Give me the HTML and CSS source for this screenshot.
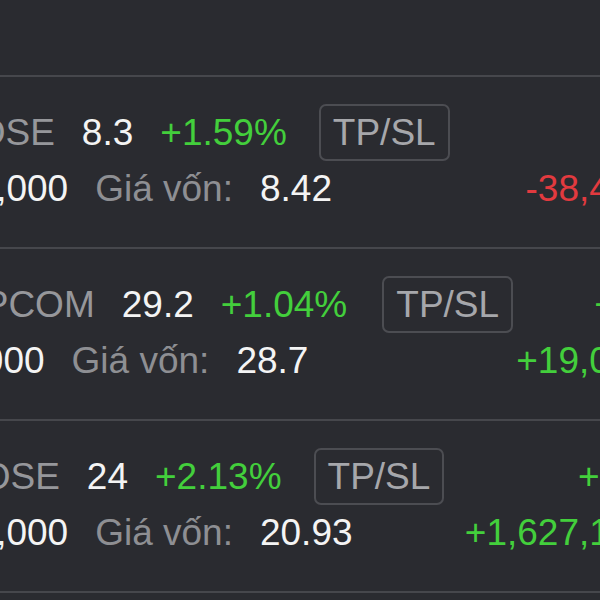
FILE: index.html
```html
<!DOCTYPE html>
<html lang="vi">
<head>
<meta charset="utf-8">
<title>Danh mục</title>
<link rel="stylesheet" href="styles.css">
</head>
<body>
<div class="screen">
  <div class="top-band"></div>
  <div class="row">
    <div class="line line-main shift-hose">
      <span class="exch">HOSE</span>
      <span class="val">8.3</span>
      <span class="up">+1.59%</span>
      <span class="tpsl">TP/SL</span>
    </div>
    <div class="right-top"></div>
    <div class="line line-sub shift-qty">
      <span class="val">10,000</span>
      <span class="label">Giá vốn:</span>
      <span class="val">8.42</span>
    </div>
    <div class="right-bottom down">-38,400</div>
  </div>
  <div class="row">
    <div class="line line-main shift-upcom">
      <span class="exch">UPCOM</span>
      <span class="val">29.2</span>
      <span class="up">+1.04%</span>
      <span class="tpsl tpsl-wide">TP/SL</span>
    </div>
    <div class="right-top up narrow">+19</div>
    <div class="line line-sub shift-qty-short">
      <span class="val">1,000</span>
      <span class="label">Giá vốn:</span>
      <span class="val">28.7</span>
    </div>
    <div class="right-bottom up">+19,000</div>
  </div>
  <div class="row">
    <div class="line line-main shift-hose2">
      <span class="exch">HOSE</span>
      <span class="val">24</span>
      <span class="up">+2.13%</span>
      <span class="tpsl">TP/SL</span>
    </div>
    <div class="right-top up">+1.5</div>
    <div class="line line-sub shift-qty">
      <span class="val">10,000</span>
      <span class="label">Giá vốn:</span>
      <span class="val">20.93</span>
    </div>
    <div class="right-bottom up">+1,627,100</div>
  </div>
</div>
</body>
</html>
```
FILE: styles.css
```css
html, body {
  margin: 0;
  padding: 0;
  background: #2a2b30;
  overflow: hidden;
}
.screen {
  width: 670px;
  padding-right: 19px;
  box-sizing: border-box;
  font-family: "Liberation Sans", Arial, sans-serif;
  font-size: 37px;
  color: #f2f2f2;
}
.top-band {
  height: 75px;
  border-bottom: 2px solid #46474c;
}
.row {
  display: grid;
  grid-template-columns: 1fr auto;
  grid-template-rows: 57px 44px;
  row-gap: 6px;
  padding: 27px 0 36px;
  border-bottom: 2px solid #46474c;
}
.line {
  display: flex;
  align-items: center;
  white-space: nowrap;
  line-height: 44px;
}
.line-main { gap: 27px; }
.line-sub { gap: 27px; }
.shift-hose { margin-left: -50px; }
.shift-hose2 { margin-left: -45px; }
.shift-upcom { margin-left: -43px; }
.shift-qty { margin-left: -45px; }
.shift-qty-short { margin-left: -48px; }
.exch { color: #96979b; }
.label { color: #8e8f93; }
.val { color: #f4f4f4; }
.up { color: #43cf3c; }
.down { color: #e23a3f; }
.tpsl {
  margin-left: 5px;
  height: 53px;
  padding: 0 12px;
  display: flex;
  align-items: center;
  border: 2px solid #4c4d52;
  border-radius: 7px;
  color: #a6a7ab;
}
.tpsl-wide { margin-left: 8px; }
.right-top, .right-bottom {
  text-align: right;
  line-height: 44px;
  white-space: nowrap;
  align-self: center;
}
.narrow { letter-spacing: -2px; }
```
